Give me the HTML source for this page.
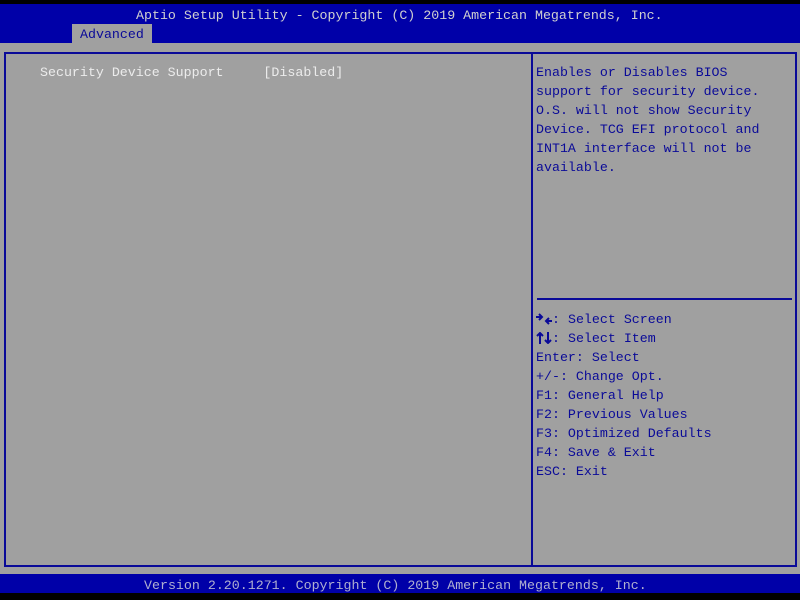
<!DOCTYPE html><html><head><style>
body{margin:0;width:800px;height:600px;background:#000;position:relative;overflow:hidden;font-family:"Liberation Mono",monospace;font-size:13.3px}
div{position:absolute;white-space:pre;line-height:19px}
.b{background:#0000a8}
svg{vertical-align:-2px}
</style></head><body>
<div class="b" style="left:0;top:4px;width:800px;height:39px"></div>
<div style="left:136px;top:6px;color:#d0d0d0">Aptio Setup Utility - Copyright (C) 2019 American Megatrends, Inc.</div>
<div style="left:72px;top:24px;width:80px;height:19px;background:#a0a0a0"></div>
<div style="left:80px;top:25px;color:#0a0a98">Advanced</div>
<div style="left:0;top:43px;width:800px;height:531px;background:#a0a0a0"></div>
<div style="left:4px;top:52px;width:789px;height:511px;border:2px solid #0a0a98"></div>
<div style="left:531px;top:54px;width:2px;height:511px;background:#0a0a98"></div>
<div style="left:537px;top:298px;width:255px;height:2px;background:#0a0a98"></div>
<div style="left:40px;top:63px;color:#ececec">Security Device Support     [Disabled]</div>
<div style="left:536px;top:63px;color:#0a0a98">Enables or Disables BIOS
support for security device.
O.S. will not show Security
Device. TCG EFI protocol and
INT1A interface will not be
available.</div>
<div style="left:536px;top:310px;color:#0a0a98"><svg width="16" height="12" viewBox="0 0 16 12"><path d="M0 4h6M3 1l3 3-3 3M16 8h-6M13 5l-3 3 3 3" stroke="#0a0a98" stroke-width="2" fill="none"/></svg>: Select Screen
<svg width="16" height="12" viewBox="0 0 16 12"><path d="M4 12V1M1 4l3-3 3 3M12 0v11M9 8l3 3 3-3" stroke="#0a0a98" stroke-width="2" fill="none"/></svg>: Select Item
Enter: Select
+/-: Change Opt.
F1: General Help
F2: Previous Values
F3: Optimized Defaults
F4: Save &amp; Exit
ESC: Exit</div>
<div class="b" style="left:0;top:574px;width:800px;height:19px"></div>
<div style="left:144px;top:576px;color:#b0b0d0">Version 2.20.1271. Copyright (C) 2019 American Megatrends, Inc.</div>
</body></html>
